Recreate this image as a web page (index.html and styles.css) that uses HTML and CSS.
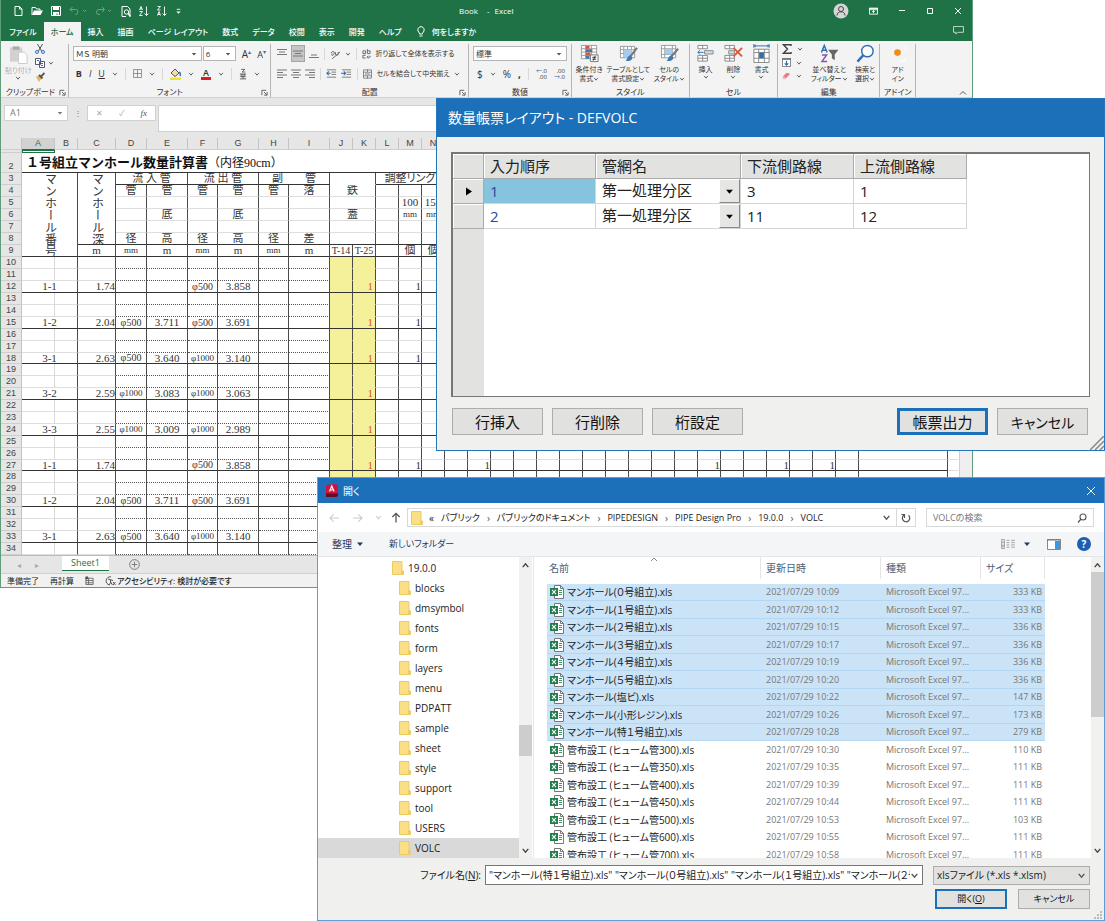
FILE: index.html
```html
<!DOCTYPE html>
<html lang="ja">
<head>
<meta charset="utf-8">
<title>Book - Excel</title>
<link rel="stylesheet" href="styles.css">
</head>
<body>
<svg class="defs" aria-hidden="true">
  <symbol id="chev" viewBox="0 0 8 8"><path d="M1.5 2.5 4 5.5 6.500 2.500" fill="none" stroke="currentColor" stroke-width="1.200"/></symbol>
  <symbol id="tri" viewBox="0 0 8 8"><path d="M1 2.500h6L4 6z" fill="currentColor"/></symbol>
  <symbol id="launch" viewBox="0 0 8 8"><path d="M1 7V1.500h5M3.500 3.500 6.500 6.500M7 3.500V7H3.500" fill="none" stroke="#555"/></symbol>
  <symbol id="folder" viewBox="0 0 12 14"><path d="M.5.500h9.500v9.500h1.500v3.500H.500z" fill="#fbdf86" stroke="#eccb63"/><path d="M10 9.500v3.500" stroke="#e3b94a"/></symbol>
  <symbol id="xls" viewBox="0 0 14 14"><path d="M4.500.500h6l3 3v10h-9z" fill="#fff" stroke="#777"/><path d="M10.500.500v3h3" fill="none" stroke="#777"/><path d="M9 5.500h3M9 7.500h3M9 9.500h3" stroke="#3c9a67"/><path d="M0 3h8v8H0z" fill="#1f7f4c"/><path d="M2 4.800l4 4.400M6 4.800 2 9.200" stroke="#fff" stroke-width="1.100"/></symbol>
  <symbol id="lines-l" viewBox="0 0 10 9"><path d="M0 1h10M0 3.500h6M0 6h10M0 8.500h6" stroke="#777"/></symbol>
  <symbol id="lines-c" viewBox="0 0 10 9"><path d="M0 1h10M2 3.500h6M0 6h10M2 8.500h6" stroke="#777"/></symbol>
  <symbol id="lines-r" viewBox="0 0 10 9"><path d="M0 1h10M4 3.500h6M0 6h10M4 8.500h6" stroke="#777"/></symbol>
  <symbol id="indent-l" viewBox="0 0 12 9"><path d="M1 .500h10M6 3h5M6 5.500h5M1 8.500h10" stroke="#777"/><path d="M5 4.300H1M3 2.300l-2 2 2 2" fill="none" stroke="#2c6fb5" stroke-width="1.200"/></symbol>
  <symbol id="indent-r" viewBox="0 0 12 9"><path d="M1 .500h10M6 3h5M6 5.500h5M1 8.500h10" stroke="#777"/><path d="M0 4.300h5M3 2.300l2 2-2 2" fill="none" stroke="#2c6fb5" stroke-width="1.200"/></symbol>
</svg>

<main class="desktop">
  <section class="excel" aria-label="Excel">
    <header class="xl-title">
      <div class="quick">
        <svg viewBox="0 0 10 10" width="10" height="10"><path d="M2 .500h4.500l2.500 2.500v6.500H2zM6.500.500v2.500H9" fill="none" stroke="#fff"/></svg>
        <svg viewBox="0 0 12 10" width="12" height="10"><path d="M1 9V1.500h3.500l1 1.500H9v1.500" fill="none" stroke="#fff"/><path d="M1 9l2-4.500h9L9.500 9z" fill="#fff"/></svg>
        <svg viewBox="0 0 10 10" width="10" height="10"><path d="M.5.500h9v9h-9z" fill="none" stroke="#fff"/><path d="M2 1h6v3H2zM2 6h6v4H6.500V7.500h-1V10H2z" fill="#fff"/></svg>
        <svg class="dim" viewBox="0 0 18 10" width="18" height="10"><path d="M3.500 1 1 3.500 3.500 6M1 3.500h5.500a2.500 2.500 0 0 1 0 5H6" fill="none" stroke="#fff"/><path d="m14 4 1.500 1.500L17 4" fill="none" stroke="#fff"/></svg>
        <svg class="dim" viewBox="0 0 18 10" width="18" height="10"><path d="M7 1l2.500 2.500L7 6M9.500 3.500H4a2.500 2.500 0 0 0 0 5h1" fill="none" stroke="#fff"/><path d="m13 4 1.500 1.500L16 4" fill="none" stroke="#fff"/></svg>
        <svg viewBox="0 0 10 11" width="10" height="11"><path d="M1 10.500V.500h5.500L9 3v7.500M1 10.500h4" fill="none" stroke="#fff"/><circle cx="5.500" cy="6" r="2.200" fill="none" stroke="#fff"/><path d="m7 7.500 2.500 3" stroke="#fff" stroke-width="1.400"/></svg>
        <svg viewBox="0 0 10 10" width="10" height="10"><path d="M.5 4 2 .500 3.500 4M1 3h2M.5 5.500h3L.500 9.500h3M7.500.500v9M5.500 7.500l2 2 2-2" fill="none" stroke="#fff" stroke-width=".9"/></svg>
        <svg viewBox="0 0 10 10" width="10" height="10"><path d="M.5.500h3L.500 4h3M.5 9.500 2 5.500l1.500 4M1 8.500h2M7.500.500v9M5.500 7.500l2 2 2-2" fill="none" stroke="#fff" stroke-width=".9"/></svg>
        <svg viewBox="0 0 8 8" width="7" height="7"><path d="M2 1.500h4" stroke="#fff"/><path d="M1.500 4h5L4 6.500z" fill="#fff"/></svg>
      </div>
      <h1 class="xl-name"><span>Book</span><span>-</span><span>Excel</span></h1>
      <div class="xl-controls">
        <svg viewBox="0 0 16 16" width="16" height="16"><circle cx="8" cy="8" r="7.500" fill="#d5d5d5"/><circle cx="8" cy="6" r="2.500" fill="none" stroke="#444"/><path d="M4 12.500c0-5 8-5 8 0" fill="none" stroke="#444"/></svg>
        <svg viewBox="0 0 10 8" width="9" height="8"><path d="M.5 1h9v6.500h-9z" fill="none" stroke="#fff"/><path d="M0 1h10v1.500H0zM5 3.500v3M3.500 5 5 3.500 6.500 5" stroke="#fff" fill="none"/></svg>
        <svg viewBox="0 0 8 8" width="8" height="8"><path d="M1 3.500h6" stroke="#fff"/></svg>
        <svg viewBox="0 0 8 8" width="8" height="8"><path d="M1.500 1.500h5v5h-5z" fill="none" stroke="#fff"/></svg>
        <svg viewBox="0 0 8 8" width="8" height="8"><path d="m1 1 6 6M7 1 1 7" stroke="#fff"/></svg>
      </div>
    </header>
    <nav class="tabs">
      <button>ファイル</button><button class="on">ホーム</button><button>挿入</button><button>描画</button><button>ページ レイアウト</button><button>数式</button><button>データ</button><button>校閲</button><button>表示</button><button>開発</button><button>ヘルプ</button>
      <button class="ask"><svg viewBox="0 0 8 11" width="8" height="11"><path d="M2.500 8V7C-.5 4.500 1 .700 4 .700S8.500 4.500 5.500 7v1zM2.500 10h3" fill="none" stroke="#fff"/></svg>何をしますか</button>
      <svg class="comment" viewBox="0 0 12 10" width="11" height="9"><path d="M.5.500h11v6.500H5L3 9V7H.500z" fill="none" stroke="#cfe3d7"/></svg>
    </nav>

    <div class="ribbon">
      <div class="group">
        <div class="body clip">
          <button class="big faded"><svg viewBox="0 0 20 20" width="19" height="19"><path d="M1 2.500h13v15H1z" fill="#d3d0d0"/><path d="M4 1.500h7V5H4z" fill="#aaa"/><path d="M10 7.500h6l3 3v9h-9z" fill="#fff" stroke="#c9c9c9"/></svg>貼り付け<svg class="cv"><use href="#chev"/></svg></button>
          <div class="stack">
            <svg viewBox="0 0 10 10" width="10" height="10"><path d="M2.500 0 6.500 7M7.500 0l-4 7" stroke="#555"/><circle cx="2" cy="8" r="1.500" fill="none" stroke="#2c6fb5"/><circle cx="8" cy="8" r="1.500" fill="none" stroke="#2c6fb5"/></svg>
            <svg viewBox="0 0 10 10" width="10" height="10"><path d="M.5.500h5v6h-5zM4.500 3.500h5v6h-5z" fill="#fff" stroke="#557"/><path d="M2 2.500h2M6 5.500h2M6 7.500h2" stroke="#2c6fb5"/></svg>
            <svg viewBox="0 0 10 10" width="10" height="10"><path d="m1 5 3-2 3 3-3 4z" fill="#eab45e"/><path d="m4 3 3.500 3.500M6 4.500 9.500 1" stroke="#555" stroke-width="1.800"/></svg>
          </div>
          <svg class="cv"><use href="#chev"/></svg>
        </div>
        <div class="cap">クリップボード<svg class="la"><use href="#launch"/></svg></div>
      </div>

      <div class="group">
        <div class="body rows">
          <div class="line">
            <div class="combo font"><input aria-label="フォント" value="ＭＳ 明朝"><svg class="cv"><use href="#tri"/></svg></div>
            <div class="combo size"><input aria-label="サイズ" value="6"><svg class="cv"><use href="#tri"/></svg></div>
            <b class="ltr la1">A<sup>▴</sup></b><b class="ltr la2">A<sup>▾</sup></b>
          </div>
          <div class="line biu">
            <b>B</b><i>I</i><u>U</u><svg class="cv"><use href="#chev"/></svg>
            <span class="bar"></span>
            <svg viewBox="0 0 10 10" width="9" height="9"><path d="M.5.500h9v9h-9zM5 .500v9M.5 5h9" fill="none" stroke="#888"/></svg><svg class="cv"><use href="#chev"/></svg>
            <span class="bar"></span>
            <svg viewBox="0 0 11 12" width="11" height="12"><path d="M1 5 5 1l4 4-4 3.500z" fill="#f6ddb0" stroke="#555"/><path d="M9 4c1.500 1 1.500 3 1 4" stroke="#2c6fb5" fill="none" stroke-width="1.500"/><path d="M0 9.500h11V12H0z" fill="#eee32f"/></svg><svg class="cv"><use href="#chev"/></svg>
            <span class="fcol">A</span><svg class="cv"><use href="#chev"/></svg>
            <span class="bar"></span>
            <svg viewBox="0 0 9 12" width="8" height="12"><path d="M2.500.800h4l-3 3h3.500M1 6h7M2.500 6v3M6.500 6v3M1.500 9h6M4.500 6v5.500M1 11.500h7" fill="none" stroke="#555"/></svg><svg class="cv"><use href="#chev"/></svg>
          </div>
        </div>
        <div class="cap">フォント<svg class="la"><use href="#launch"/></svg></div>
      </div>

      <div class="group">
        <div class="body rows">
          <div class="line al">
            <svg viewBox="0 0 10 9" width="10" height="9"><path d="M0 .500h10M2 3h6M0 5.500h10" stroke="#777"/></svg>
            <span class="pressed"><svg viewBox="0 0 10 9" width="10" height="9"><path d="M0 2h10M2 4.500h6M0 7h10" stroke="#777"/></svg></span>
            <svg viewBox="0 0 10 9" width="10" height="9"><path d="M2 6h6M0 8.500h10" stroke="#777"/></svg>
            <span class="bar"></span>
            <svg viewBox="0 0 11 10" width="11" height="10"><path d="M1 4c2-3 4-1 3 1S1 7 2 4.500M5 3l1 3c2 1 3-1 2-3M2 10l8-7" fill="none" stroke="#666"/></svg><svg class="cv"><use href="#chev"/></svg>
            <span class="bar"></span>
            <svg viewBox="0 0 10 11" width="9" height="10"><path d="M1 2h3v3H1zM6 0v5h3V2H6M4 7H1v3h3M9 7.500v1.500H6M7 7.500 5.500 9 7 10.500" fill="none" stroke="#567"/></svg><span>折り返して全体を表示する</span>
          </div>
          <div class="line al">
            <svg width="10" height="9"><use href="#lines-l"/></svg><svg width="10" height="9"><use href="#lines-c"/></svg><svg width="10" height="9"><use href="#lines-r"/></svg>
            <span class="bar"></span>
            <svg width="11" height="9"><use href="#indent-l"/></svg><svg width="11" height="9"><use href="#indent-r"/></svg>
            <span class="bar"></span>
            <svg viewBox="0 0 10 10" width="9" height="10"><path d="M.5.500h9v9h-9zM.5 3h9M.5 7h9M5 0v3M5 7v3" fill="#fff" stroke="#777"/><path d="M2 5h6" stroke="#2c6fb5"/></svg><span>セルを結合して中央揃え</span><svg class="cv"><use href="#chev"/></svg>
          </div>
        </div>
        <div class="cap">配置<svg class="la"><use href="#launch"/></svg></div>
      </div>

      <div class="group">
        <div class="body rows">
          <div class="line"><div class="combo num"><input aria-label="表示形式" value="標準"><svg class="cv"><use href="#tri"/></svg></div></div>
          <div class="line nums"><span>$</span><svg class="cv"><use href="#chev"/></svg><span>%</span><b>,</b><span class="bar"></span>
            <span class="dec"><span><em>←</em>.0</span><span>.00</span></span><span class="dec"><span>.00</span><span><em>→</em>.0</span></span></div>
        </div>
        <div class="cap">数値<svg class="la"><use href="#launch"/></svg></div>
      </div>

      <div class="group">
        <div class="body bigs">
          <button class="big"><svg viewBox="0 0 20 20" width="19" height="19"><path d="M1.500 1.500h16v14h-16zM1.500 5h16M1.500 8.500h16M1.500 12h16M6 1.500v14M12 1.500v14" fill="#fff" stroke="#999"/><path d="M6 2h4v3H6zM6 9h5v3H6z" fill="#d9573c"/><path d="M6 5.500h7v3H6zM6 12.500h4v3H6z" fill="#3d7ab8"/><path d="M11 11.500h8v7h-8z" fill="#fff" stroke="#777"/><path d="M13 14h4M13 16h4M16 12.500l-2 5" stroke="#333"/></svg>条件付き<span>書式<svg class="cv"><use href="#chev"/></svg></span></button>
          <button class="big"><svg viewBox="0 0 20 20" width="19" height="19"><path d="M1.500 2.500h15v12h-15zM1.500 6h15M1.500 10h15M5 2.500v12M9 2.500v12M13 2.500v12" fill="#fff" stroke="#999"/><path d="M5 6h9v8H5z" fill="#a9cbea"/><path d="m19 4-7 9" stroke="#777" stroke-width="2.200"/><path d="M12 12c-3 0-3 4-5 5.500 4 1 7 0 7-3.500z" fill="#3d7ab8"/></svg>テーブルとして<span>書式設定<svg class="cv"><use href="#chev"/></svg></span></button>
          <button class="big"><svg viewBox="0 0 20 20" width="19" height="19"><path d="M1.500 1.500h15v13h-15zM1.500 5h15M1.500 11h15M5 1.500v13M13 1.500v13" fill="#fff" stroke="#999"/><path d="M5 5h8v6H5z" fill="#a9cbea"/><path d="m19 5-7 8" stroke="#777" stroke-width="2.200"/><path d="M12 12c-3 0-3 4-5 5.500 4 1 7 0 7-3.500z" fill="#3d7ab8"/></svg>セルの<span>スタイル<svg class="cv"><use href="#chev"/></svg></span></button>
        </div>
        <div class="cap">スタイル</div>
      </div>

      <div class="group">
        <div class="body bigs">
          <button class="big"><svg viewBox="0 0 20 20" width="19" height="19"><path d="M2 1.500h10V5H2zM7 1.500V5M2 12h10v6H2zM2 15h10M7 12v6" fill="#fff" stroke="#888"/><path d="M9 7h9v3.500H9z" fill="#c9dff2" stroke="#888"/><path d="M8 8.800H2M4 6.500 2 8.800 4 11" fill="none" stroke="#2c6fb5"/></svg>挿入<svg class="cv"><use href="#chev"/></svg></button>
          <button class="big"><svg viewBox="0 0 20 20" width="19" height="19"><path d="M1 1.500h10V5H1zM6 1.500V5M1 12h10v6H1zM1 15h10M6 12v6" fill="#fff" stroke="#888"/><path d="M5 7h6v3.500H5z" fill="#c9dff2" stroke="#888"/><path d="m10 4 9 9M19 4l-9 9" stroke="#d9573c" stroke-width="2"/></svg>削除<svg class="cv"><use href="#chev"/></svg></button>
          <button class="big"><svg viewBox="0 0 20 20" width="19" height="19"><path d="M2 2h16M2 0v4M18 0v4M4 1 2.500 2 4 3M16 1l1.500 1L16 3" fill="none" stroke="#2c6fb5"/><path d="M2 5.500h16v14H2zM2 9h16M2 15h16M7 5.500v14M13 5.500v14" fill="#fff" stroke="#888"/><path d="M7.500 9h5v6h-5z" fill="#2c6fb5"/></svg>書式<svg class="cv"><use href="#chev"/></svg></button>
        </div>
        <div class="cap">セル</div>
      </div>

      <div class="group">
        <div class="body edit">
          <div class="stack">
            <span><svg viewBox="0 0 10 10" width="10" height="10"><path d="M9 2V.800H1.500L5.500 5l-4 4.200H9V8" fill="none" stroke="#444" stroke-width="1.400"/></svg><svg class="cv"><use href="#chev"/></svg></span>
            <span><svg viewBox="0 0 10 10" width="9" height="9"><path d="M.5 1h9v8.500h-9z" fill="#fff" stroke="#777"/><path d="M0 1h10" stroke="#777" stroke-width="2"/><path d="M5 3v5M3 6l2 2 2-2" fill="none" stroke="#2c6fb5" stroke-width="1.300"/></svg><svg class="cv"><use href="#chev"/></svg></span>
            <span><svg viewBox="0 0 10 10" width="9" height="9"><path d="m1 6 4-4 4 1-4.500 5z" fill="#e8798c"/><path d="m1 6 3.500 2-1 1.500-3-1z" fill="#f3b5be"/></svg><svg class="cv"><use href="#chev"/></svg></span>
          </div>
          <button class="big"><svg viewBox="0 0 20 20" width="19" height="19"><path d="M1.500 9 4.500 1.500 7.500 9M2.500 6.500h4" fill="none" stroke="#2c6fb5" stroke-width="1.500"/><path d="M2 11.500h5l-5 7h5.500" fill="none" stroke="#8a55a8" stroke-width="1.500"/><path d="M8.500 6h11l-4 5v6l-3-2v-4z" fill="#666"/></svg>並べ替えと<span>フィルター<svg class="cv"><use href="#chev"/></svg></span></button>
          <button class="big"><svg viewBox="0 0 20 20" width="19" height="19"><circle cx="12" cy="7.500" r="6" fill="#fff" stroke="#2c6fb5" stroke-width="1.500"/><path d="m7.500 12-6 6.500" stroke="#2c6fb5" stroke-width="2.500"/></svg>検索と<span>選択<svg class="cv"><use href="#chev"/></svg></span></button>
        </div>
        <div class="cap">編集</div>
      </div>

      <div class="group">
        <div class="body bigs"><button class="big"><svg viewBox="0 0 20 20" width="19" height="19"><circle cx="10" cy="9" r="3.500" fill="#f08c1a"/><path d="M18 2v4M13 18h5v-4" fill="none" stroke="#fff"/></svg>アド<span>イン</span></button></div>
        <div class="cap">アドイン</div>
      </div>
      <div class="group last"><svg viewBox="0 0 8 8" width="8" height="8"><path d="M1 5.500 4 2.500l3 3" fill="none" stroke="#555"/></svg></div>
    </div>

    <div class="formula">
      <div class="namebox"><input aria-label="名前ボックス" value="A1"><svg class="cv"><use href="#tri"/></svg></div>
      <span class="dots">⋮</span>
      <div class="fx"><span>✕</span><span>✓</span><i>fx</i></div>
      <input class="fbar" aria-label="数式バー">
    </div>

    <div class="sheetwrap">
      <table class="sheet">
        <colgroup id="cols"></colgroup>
        <thead><tr id="letters"></tr></thead>
        <tbody id="top">
          <tr class="r1"><th></th><td class="active"></td><td colspan="33"></td></tr>
          <tr class="r2"><th>2</th><td colspan="34" class="title"><b>１号組立マンホール数量計算書</b><span>（内径90cm）</span></td></tr>
          <tr><th>3</th><td colspan="2" rowspan="7" class="k b vert"><span>マンホール番号</span></td><td rowspan="6" class="k b vert"><span>マンホール深</span></td><td colspan="2" class="k b">流 入 管</td><td colspan="2" class="k b">流 出 管</td><td colspan="2" class="k b">副　　管</td><td colspan="2" class="k"></td><td colspan="3" class="k b">調整リング</td><td class="b" colspan="20"></td></tr>
          <tr><th>4</th><td class="k g">管</td><td class="k g">管</td><td class="k g">管</td><td class="k g">管</td><td class="k g">管</td><td class="k g">落</td><td colspan="2" class="k g">鉄</td><td class="k g"></td><td class="k g"></td><td class="k g"></td><td colspan="20" class="g"></td></tr>
          <tr><th>5</th><td class="k g"></td><td class="k g"></td><td class="k g"></td><td class="k g"></td><td class="k g"></td><td class="k g"></td><td colspan="2" class="k g"></td><td class="k g"></td><td class="k g">100</td><td class="k g">150</td><td colspan="20" class="g"></td></tr>
          <tr><th>6</th><td class="k g"></td><td class="k g">底</td><td class="k g"></td><td class="k g">底</td><td class="k g"></td><td class="k g"></td><td colspan="2" class="k g">蓋</td><td class="k g"></td><td class="k g xs">mm</td><td class="k g xs">mm</td><td colspan="20" class="g"></td></tr>
          <tr><th>7</th><td class="k g"></td><td class="k g"></td><td class="k g"></td><td class="k g"></td><td class="k g"></td><td class="k g"></td><td colspan="2" class="k g"></td><td class="k g"></td><td class="k g"></td><td class="k g"></td><td colspan="20" class="g"></td></tr>
          <tr><th>8</th><td class="k b">径</td><td class="k b">高</td><td class="k b">径</td><td class="k b">高</td><td class="k b">径</td><td class="k b">差</td><td colspan="2" class="k b"></td><td class="k b"></td><td class="k b"></td><td class="k b"></td><td colspan="20" class="b"></td></tr>
          <tr><th>9</th><td class="k b">m</td><td class="k b xs">mm</td><td class="k b">m</td><td class="k b xs">mm</td><td class="k b">m</td><td class="k b xs">mm</td><td class="k b">m</td><td class="k b s">T-14</td><td class="k b s">T-25</td><td class="k b"></td><td class="k b">個</td><td class="k b">個</td><td colspan="20" class="b"></td></tr>
        </tbody>
        <tbody id="data"></tbody>
      </table>
      <div class="vscroll"></div>
    </div>

    <div class="sheettabs"><span class="arr">◂</span><span class="arr">▸</span><button>Sheet1</button><svg viewBox="0 0 12 12" width="11" height="11"><circle cx="6" cy="6" r="5.300" fill="none" stroke="#777"/><path d="M6 3v6M3 6h6" stroke="#777"/></svg></div>
    <footer class="status"><span>準備完了</span><span>再計算</span><svg viewBox="0 0 10 10" width="9" height="9"><path d="M1 2.500h8v7H1zM1 5h8M1 7.500h8M4 2.500v7" fill="none" stroke="#666"/><circle cx="2" cy="2" r="1.800" fill="#555"/></svg><span class="acc"><svg viewBox="0 0 11 10" width="11" height="10"><path d="M6 .800A4 4 0 1 0 4.500 9M3 3l5 1.500M5.500 4v2l2 3M6 6 4 9M8 6l2.500 3M10.500 6 8 9" fill="none" stroke="#555"/></svg>アクセシビリティ: 検討が必要です</span></footer>
  </section>

  <section class="layout" aria-label="数量帳票レイアウト">
    <h2>数量帳票レイアウト - DEFVOLC</h2>
    <div class="lbody">
      <div class="gridbox">
        <table class="dgrid">
          <colgroup><col class="c0"><col class="c1"><col class="c2"><col class="c3"><col class="c3"></colgroup>
          <thead><tr><th></th><th>入力順序</th><th>管網名</th><th>下流側路線</th><th>上流側路線</th></tr></thead>
          <tbody>
            <tr><th><svg viewBox="0 0 6 8" width="6" height="9"><path d="M0 0v8l6-4z"/></svg></th><td class="num sel">1</td><td><div class="dd"><span>第一処理分区</span><button aria-label="管網名を選択"><svg class="cv"><use href="#tri"/></svg></button></div></td><td>3</td><td>1</td></tr>
            <tr><th></th><td class="num">2</td><td><div class="dd"><span>第一処理分区</span><button aria-label="管網名を選択"><svg class="cv"><use href="#tri"/></svg></button></div></td><td>11</td><td>12</td></tr>
          </tbody>
        </table>
        <div class="rail"></div>
      </div>
      <div class="lbtns"><button>行挿入</button><button>行削除</button><button>桁設定</button><button class="primary">帳票出力</button><button class="cancel">キャンセル</button></div>
    </div>
    <svg class="grip" viewBox="0 0 14 14" width="14" height="14"><path d="M0 14 14 0M5 14l9-9M10 14l4-4" stroke="#888" stroke-width="1.500"/></svg>
  </section>

  <section class="open" aria-label="開く">
    <header class="otitle"><svg viewBox="0 0 12 13" width="12" height="13"><path d="M0 1l9-1 3 1v11l-2 1H0z" fill="#d3123f"/><path d="M0 9.500h12V12l-2 1H0z" fill="#6d0a24"/><path d="M3.500 7.500 5.800 2l2.300 5.500M4.500 6h2.800" fill="none" stroke="#fff" stroke-width="1.200"/></svg><h2>開く</h2><svg class="x" viewBox="0 0 10 10" width="10" height="10"><path d="m1 1 8 8M9 1 1 9" stroke="#fff"/></svg></header>
    <div class="address">
      <svg viewBox="0 0 12 10" width="11" height="10"><path d="M11 5H1.500M5 1 1 5l4 4" fill="none" stroke="#ccc" stroke-width="1.200"/></svg>
      <svg viewBox="0 0 12 10" width="11" height="10"><path d="M1 5h9.500M7 1l4 4-4 4" fill="none" stroke="#ccc" stroke-width="1.200"/></svg>
      <svg class="cv pale"><use href="#chev"/></svg>
      <svg viewBox="0 0 10 12" width="10" height="11"><path d="M5 11.500V1.500M1 5.500l4-4 4 4" fill="none" stroke="#555" stroke-width="1.400"/></svg>
      <div class="path"><svg width="12" height="14"><use href="#folder"/></svg><span>«</span><span>パブリック</span><i>›</i><span>パブリックのドキュメント</span><i>›</i><span>PIPEDESIGN</span><i>›</i><span>PIPE Design Pro</span><i>›</i><span>19.0.0</span><i>›</i><span>VOLC</span><svg class="cv end"><use href="#chev"/></svg><span class="re"><svg viewBox="0 0 10 10" width="10" height="10"><path d="M3 2a3.700 3.700 0 1 0 4.500.300M3.500 5V1.500H.500" fill="none" stroke="#555" stroke-width="1.200"/></svg></span></div>
      <label class="search"><input type="text" placeholder="VOLCの検索" aria-label="VOLCの検索"><svg viewBox="0 0 10 10" width="10" height="10"><circle cx="6" cy="4" r="3" fill="none" stroke="#555" stroke-width="1.100"/><path d="M4 6 1 9.500" stroke="#555" stroke-width="1.200"/></svg></label>
    </div>
    <div class="tools"><button>整理<svg class="cv"><use href="#tri"/></svg></button><button class="newf">新しいフォルダー</button>
      <span class="tright"><svg viewBox="0 0 15 11" width="14" height="10"><path d="M.5.500h3v10h-3zM.5 3.500h3M.5 7h3" fill="none" stroke="#999"/><path d="M6 1.500h3M11 1.500h4M6 4h3M11 4h4M6 6.500h3M11 6.500h4M6 9h3M11 9h4" stroke="#999"/><path d="M1.500 8.500h1" stroke="#d33"/></svg><svg class="cv"><use href="#tri"/></svg><svg class="pane" viewBox="0 0 14 11" width="14" height="11"><path d="M.5.500h13v10H.500z" fill="#fff" stroke="#888"/><path d="M0 1h14" stroke="#777"/><path d="M8 2h5v8H8z" fill="#3e97dd"/></svg><span class="help">?</span></span></div>
    <div class="obody">
      <div class="treewrap"><ul class="tree" id="tree"></ul><div class="sb"><svg class="cv"><use href="#chev"/></svg><span class="thumb"></span><svg class="cv"><use href="#chev"/></svg></div></div>
      <div class="listwrap">
        <svg class="sort" viewBox="0 0 8 5" width="8" height="5"><path d="M1 4l3-3 3 3" fill="none" stroke="#888"/></svg>
        <table class="files">
          <colgroup><col><col class="cd"><col class="ct"><col class="cs"></colgroup>
          <thead><tr><th>名前</th><th>更新日時</th><th>種類</th><th>サイズ</th></tr></thead>
          <tbody id="files"></tbody>
        </table>
        <div class="sb"><svg class="cv"><use href="#chev"/></svg><span class="thumb"></span><svg class="cv"><use href="#chev"/></svg></div>
      </div>
    </div>
    <div class="ofoot">
      <div class="frow"><label for="fname">ファイル名(<u>N</u>):</label>
        <div class="fname"><input id="fname" value='"マンホール(特１号組立).xls" "マンホール(０号組立).xls" "マンホール(１号組立).xls" "マンホール(２号組立).xls"'><svg class="cv"><use href="#chev"/></svg></div>
        <div class="ftype"><select aria-label="ファイルの種類"><option>xlsファイル (*.xls *.xlsm)</option></select><svg class="cv"><use href="#chev"/></svg></div></div>
      <div class="brow"><button class="primary">開く(<u>O</u>)</button><button>キャンセル</button></div>
    </div>
    <svg class="ogrip" viewBox="0 0 8 8" width="8" height="8"><path d="M6 0h2v2H6zM6 3h2v2H6zM3 3h2v2H3zM6 6h2v2H6zM3 6h2v2H3zM0 6h2v2H0z" fill="#bbb"/></svg>
  </section>
</main>
<script src="app.js"></script>
</body>
</html>
```
FILE: styles.css
```css
* { box-sizing: border-box; }
body { margin: 0; background: #fff; color: #222; font-family: "Open Sans", "Noto Sans CJK JP", sans-serif; font-size: 10px; font-feature-settings: "palt"; }
button, input, select { font: inherit; color: inherit; font-feature-settings: inherit; margin: 0; padding: 0; border: 0; background: none; border-radius: 0; outline: 0; min-width: 0; }
button { white-space: nowrap; }
h1, h2, ul { margin: 0; padding: 0; font-weight: normal; list-style: none; }
svg { display: block; flex: none; }
.defs { position: absolute; width: 0; height: 0; }
.cv { width: 7px; height: 7px; }
.desktop { position: relative; min-height: 100vh; overflow: hidden; }

/* Excel window */
.excel { position: absolute; left: 0; top: 0; right: 132px; border: 1px solid #5f9d7c; border-top: 0; font-size: 8px; line-height: 10px; background: #e6e6e6; display: flex; flex-direction: column; }
.xl-title { display: flex; align-items: center; justify-content: space-between; height: 22px; background: #1f7246; color: #fff; padding: 0 10px 0 12px; }
.quick { display: flex; align-items: center; gap: 8px; width: 420px; }
.dim { opacity: .35; }
.xl-name { display: flex; gap: 9px; font-size: 8px; flex: 1; padding-left: 26px; }
.xl-name span:nth-child(2) { margin-right: -4px; }
.xl-controls { display: flex; align-items: center; gap: 20px; }
.tabs { display: flex; align-items: stretch; height: 19px; background: #1f7246; color: #fff; padding-left: 1px; }
.tabs button { padding: 0 7px; font-weight: 500; }
.tabs .on { background: #f3f3f3; color: #1f7246; }
.tabs .ask { display: flex; align-items: center; gap: 7px; padding-left: 8px; }
.comment { margin: 4px 8px 0 auto; }
.ribbon { display: grid; grid-template-columns: 68fr 203fr 198fr 103fr 118fr 89fr 102fr 36fr 56fr; height: 57px; background: #f3f3f3; border-bottom: 1px solid #d2d2d2; padding-top: 3px; color: #333; }
.ribbon .cv { width: 6px; height: 6px; color: #555; }
.group { display: flex; flex-direction: column; justify-content: space-between; border-right: 1px solid #b5b5b5; min-width: 0; white-space: nowrap; }
.group.last { border: 0; justify-content: flex-end; align-items: flex-end; padding: 0 5px 0 0; }
.cap { position: relative; text-align: center; height: 9px; line-height: 7px; }
.ribbon .group:first-child .cap { padding-right: 8px; }
.la { position: absolute; right: 2px; bottom: 1px; width: 7px; height: 7px; }
.body { display: flex; padding: 0 4px; }
.clip { align-items: center; gap: 3px; }
.big { display: flex; flex-direction: column; align-items: center; font-size: 7px; line-height: 9px; }
.big > svg:first-child { margin-bottom: 2px; }
.big > span { display: flex; align-items: center; }
.faded { color: #b0b0b0; }
.stack { display: flex; flex-direction: column; gap: 4px; }
.stack span { display: flex; align-items: center; gap: 5px; }
.rows { flex-direction: column; gap: 3px; padding-top: 1px; }
.line { display: flex; align-items: center; height: 17px; gap: 6px; }
.combo { display: flex; align-items: center; height: 15px; background: #fff; border: 1px solid #b5b5b5; padding: 0 4px 0 2px; }
.combo input { flex: 1; width: 20px; }
.combo.font { flex: 1; max-width: 129px; }
.combo.size { width: 33px; margin-left: -5px; }
.combo.num { flex: 1; }
.ltr { font-weight: 500; font-size: 10px; }
.la2 { font-size: 9px; }
.ltr sup { font-size: 6px; color: #2c6fb5; }
.bar { width: 1px; height: 12px; background: #d8d8d8; }
.biu { gap: 7px; padding-left: 3px; font-size: 9px; }
.fcol { border-bottom: 3px solid #e11b1b; padding: 0 2px; line-height: 9px; font-weight: 600; }
.al { gap: 4px; padding-left: 2px; }
.al > span { font-size: 7px; }
.al > .bar { margin: 0 1px; }
.pressed { background: #c6c6c6; border: 1px solid #a5a5a5; padding: 3px 1px; }
.nums { gap: 7px; padding-left: 4px; font-size: 10px; }
.dec { display: flex; flex-direction: column; font-size: 6px; line-height: 6px; align-items: flex-end; }
.dec em { font-style: normal; color: #2c6fb5; }
.bigs { justify-content: space-around; padding: 0 2px; }
.edit { justify-content: space-between; }
.formula { display: flex; align-items: flex-start; height: 40px; padding-top: 7px; color: #777; }
.namebox { display: flex; align-items: center; width: 64px; height: 16px; margin-left: 3px; background: #fff; border: 1px solid #d0d0d0; padding: 0 4px 0 5px; }
.namebox input { flex: 1; width: 20px; font-size: 9px; }
.namebox .cv { width: 6px; height: 6px; }
.dots { width: 19px; text-align: center; line-height: 16px; }
.fx { display: flex; align-items: center; justify-content: space-around; width: 69px; height: 16px; background: #fff; border: 1px solid #d0d0d0; color: #aaa; }
.fx i { color: #555; font-family: "Liberation Serif", serif; font-size: 9px; }
.fbar { flex: 1; height: 27px; margin-left: 2px; background: #fff; border: 1px solid #d0d0d0; }

/* Worksheet */
.sheetwrap { display: flex; height: 417px; overflow: hidden; background: #fff; }
.vscroll { width: 13px; flex: none; background: #efefef; border-left: 1px solid #d0d0d0; }
.sheet { flex: 1; width: 100%; table-layout: fixed; border-collapse: separate; border-spacing: 0; font-family: "Liberation Serif", "Noto Sans CJK JP", serif; font-size: 11px; line-height: 11px; height: 0; color: #333; }
.sheet col { width: 23px; }
.sheet col.w11 { width: 11px; }
.sheet col.w21 { width: 21px; }
.sheet col.w30 { width: 30px; }
.sheet col.w31 { width: 31px; }
.sheet col.w33 { width: 33px; }
.sheet col.w38 { width: 38px; }
.sheet col.w41 { width: 41px; }
.sheet col.auto { width: auto; }
.sheet tr { height: 12px; }
.sheet th, .sheet td { padding: 0; white-space: nowrap; overflow: hidden; text-align: center; vertical-align: bottom; border-right: 1px solid transparent; border-bottom: 1px solid transparent; }
.sheet th { background: #e6e6e6; font: 9px/11px "Liberation Sans", sans-serif; color: #444; border-right-color: #c4c4c4; border-bottom-color: #cecece; }
.sheet thead th.cur { background: #d2d2d2; color: #1f7246; border-bottom-color: #1f7246; }
.sheet .r1 { height: 3px; }
.sheet .r1 td, .sheet .r1 th { height: 3px; line-height: 0; }
.sheet .r1 .active { border: 1px solid #1f7246; }
.sheet .r2 { height: 20px; }
.sheet .r2 th { vertical-align: bottom; }
.sheet .title { text-align: left; padding-left: 4px; font-size: 13px; line-height: 18px; border-bottom-color: #333; font-feature-settings: normal; vertical-align: middle; color: #111; }
.sheet .title b { font-weight: 700; }
.sheet .title span { font-size: 12px; }
.sheet .l { border-right-color: #d9d9d9; }
.sheet .g { border-bottom-color: #dedede; }
.sheet .k { border-right-color: #4a4a4a; }
.sheet .b { border-bottom-color: #333; }
.sheet .d { border-bottom: 1px dotted #555; }
.sheet .s { font-size: 10px; }
.sheet .xs { font-size: 9px; }
.sheet .r { text-align: right; }
.sheet .y { background: #f4f19a; color: #e2502e; text-align: right; padding-right: 2px; }
.sheet .vert { vertical-align: middle; font-size: 12px; line-height: 12px; font-feature-settings: normal; }
.vert span { display: inline-block; vertical-align: top; writing-mode: vertical-rl; line-height: 14px; margin: -1px 0; }
#data tr:nth-child(9n) { height: 11px; }
#data tr:nth-child(9n) td, #data tr:nth-child(9n) th { line-height: 10px; }
.sheettabs { display: flex; align-items: center; height: 18px; gap: 14px; padding-left: 16px; border-top: 1px solid #bbb; color: #aaa; }
.arr { width: 4px; }
.sheettabs button { align-self: stretch; background: #fff; color: #1f7246; border-bottom: 1px solid #1f7246; padding: 0 9px; font-size: 9px; margin-left: 9px; margin-bottom: 2px; }
.sheettabs svg { margin-left: 6px; }
.status { display: flex; align-items: center; height: 14px; gap: 11px; padding-left: 6px; background: #f1f1f1; border-top: 1px solid #d0d0d0; }
.acc { display: flex; gap: 1px; font-weight: 500; }

/* Layout dialog */
.layout { position: absolute; left: 436px; right: 0; top: 98px; border: 1px solid #2576b9; background: #f0f0ef; font-size: 15px; }
.layout h2 { height: 38px; padding-left: 11px; line-height: 38px; font-size: 14px; color: #fff; background: #1b70b9; }
.lbody { padding: 15px 14px; }
.gridbox { display: flex; flex-direction: column; height: 245px; background: #fff; border: 1px solid #777; border-left-width: 2px; border-top-width: 2px; }
.dgrid { width: 514px; table-layout: fixed; border-collapse: separate; border-spacing: 0; line-height: 22px; }
.c0 { width: 31px; } .c1 { width: 112px; } .c2 { width: 145px; } .c3 { width: 113px; }
.dgrid th, .dgrid td { height: 25px; padding: 0 0 0 6px; text-align: left; font-weight: normal; border-right: 1px solid #d5d5d5; border-bottom: 1px solid #d5d5d5; white-space: nowrap; }
.dgrid th { background: #e2e2e1; border-color: #aaa; box-shadow: inset 1px 1px #fff; }
.dgrid tbody th { padding-left: 13px; }
.dgrid .num { color: #2c4a9d; }
.dgrid .sel { background: #86c3de; }
.dd { display: flex; justify-content: space-between; height: 24px; }
.dd button { width: 21px; background: #e6e6e5; border: 1px solid #fff; border-right-color: #888; border-bottom-color: #888; display: flex; align-items: center; justify-content: center; color: #000; }
.dd .cv { width: 9px; height: 9px; }
.rail { width: 31px; flex: 1; background: #e2e2e1; }
.lbtns { display: flex; gap: 9px; margin-top: 11px; padding: 0 2px 0 1px; }
.lbtns button, .brow button { background: #e1e1e0; border: 1px solid #adadad; color: #111; }
.lbtns button { width: 91px; height: 27px; }
.lbtns .primary { margin-left: auto; border: 3px solid #1b70b9; }
.lbtns .cancel { font-size: 14px; }
.grip { position: absolute; right: 0; bottom: 0; }

/* Open dialog */
.open { position: absolute; left: 317px; right: 0; top: 477px; border: 1px solid #5a9fd6; background: #fff; display: flex; flex-direction: column; line-height: 14px; }
.otitle { display: flex; align-items: center; gap: 5px; height: 25px; background: #1b70b9; color: #fff; padding: 0 8px; }
.otitle h2 { font-size: 10px; }
.otitle .x { margin-left: auto; }
.address { display: flex; align-items: center; gap: 12px; height: 29px; padding: 0 10px 0 11px; color: #222; }
.pale { color: #ccc; }
.address > .cv { margin-right: -3px; }
.path { display: flex; align-items: center; flex: 1; height: 19px; gap: 7px; border: 1px solid #d9d9d9; padding-left: 3px; margin-left: -6px; white-space: nowrap; font-size: 9px; }
.path > span:nth-of-type(1) { margin: 0 0 0 -1px; font-size: 10px; }
.path i { font-style: normal; color: #555; font-size: 10px; }
.path .end { margin-left: auto; width: 9px; height: 9px; color: #555; }
.re { display: flex; align-items: center; align-self: stretch; padding: 0 4px; border-left: 1px solid #d9d9d9; margin-left: -2px; }
.search { display: flex; align-items: center; width: 168px; height: 19px; border: 1px solid #d9d9d9; padding: 0 6px; margin-left: -2px; font-size: 9px; }
.search input { flex: 1; }
.search input::placeholder { color: #777; opacity: 1; }
.tools { display: flex; align-items: center; gap: 25px; height: 25px; background: #f4f5f7; border-bottom: 1px solid #e4e6e9; padding: 0 13px 0 14px; color: #1e3a63; }
.tools button { display: flex; align-items: center; gap: 4px; }
.tools .newf { font-size: 9px; }
.tright { display: flex; align-items: center; gap: 8px; margin-left: auto; }
.tools .cv { width: 8px; height: 8px; }
.pane { margin: 0 8px; }
.help { width: 14px; height: 14px; border-radius: 50%; background: #1b5fae; color: #fff; font-weight: 700; text-align: center; line-height: 14px; }
.obody { display: flex; height: 301px; overflow: hidden; }
.treewrap { display: flex; width: 214px; flex: none; }
.tree { flex: 1; padding-top: 1px; }
.tree li { display: flex; align-items: center; gap: 4px; height: 20px; padding-left: 81px; }
.tree li:first-child { padding-left: 74px; }
.tree .cur { background: #d9d9d9; }
.sb { display: flex; flex-direction: column; align-items: center; justify-content: space-between; width: 13px; padding: 4px 0 3px; background: #f1f1f0; color: #444; }
.sb .cv { width: 9px; height: 9px; }
.sb .cv:first-child { transform: rotate(180deg); }
.sb .thumb { width: 13px; height: 31px; background: #cdcdcd; }
.listwrap { position: relative; display: flex; justify-content: space-between; flex: 1; border-left: 1px solid #e8e8e8; margin-left: 1px; min-width: 0; }
.treewrap .sb .thumb { margin: 64px 0 0; }
.listwrap .sb { justify-content: flex-start; gap: 2px; }
.listwrap .sb .thumb { height: 145px; margin: 0 0 auto; }
.sort { position: absolute; left: 116px; top: 0; }
.files { flex: 1; margin: 0 46px 0 13px; height: 0; table-layout: fixed; border-collapse: separate; border-spacing: 0; }
.cd { width: 120px; } .ct { width: 100px; } .cs { width: 64px; }
.files th { height: 22px; padding: 0 0 0 5px; text-align: left; font-weight: normal; color: #4c607a; border-right: 1px solid #e5e5e5; }
.files th:first-child { padding-left: 2px; }
.files tbody::before { content: ""; display: block; height: 5px; }
.files td { height: 17px; padding: 0 0 0 5px; line-height: 16px; white-space: nowrap; font-size: 9px; color: #777; border-bottom: 1px solid transparent; }
.files tr:nth-child(even) td { height: 18px; }
.files td:first-child { font-size: 10px; color: #222; padding-left: 3px; }
.files td:last-child { text-align: right; padding-right: 3px; }
.files .hit td { background: #cbe3f6; border-bottom-color: #b3d6f2; }
.fn { display: flex; align-items: center; gap: 3px; }
.ofoot { background: #f0f0ef; padding: 7px 14px 11px; display: flex; flex-direction: column; gap: 4px; }
.frow { display: flex; align-items: center; }
.frow label { flex: none; width: 153px; text-align: right; padding-right: 4px; }
.fname { display: flex; align-items: center; flex: 1; height: 20px; min-width: 0; background: #fff; border: 1px solid #777; padding: 0 3px; }
.fname input { flex: 1; }
.fname .cv, .ftype .cv { width: 9px; height: 9px; color: #555; }
.ftype { display: flex; align-items: center; width: 157px; height: 19px; margin-left: 10px; background: #e1e1e0; border: 1px solid #adadad; padding: 0 3px; }
.ftype select { flex: 1; appearance: none; }
.brow { display: flex; justify-content: flex-end; gap: 11px; }
.brow button { width: 72px; height: 20px; font-size: 9px; }
.brow .primary { border: 2px solid #1b70b9; }
.ogrip { position: absolute; right: 2px; bottom: 1px; }
```
FILE: app.js
```js
// Worksheet columns: row header, A-K in their own widths, narrow L-AF, stretchy AG, AH
const widths = ["w21", "w33", "", "w38", "w31", "w41", "w30", "w41", "w30", "w41"];
while (widths.length < 33) widths.push("");
widths.push("auto", "w11");
document.getElementById("cols").innerHTML = widths.map(w => `<col class="${w}">`).join("");

const letter = i => (i < 26 ? "" : "A") + String.fromCharCode(65 + i % 26);
document.getElementById("letters").innerHTML = "<th></th>" +
  Array.from({ length: 34 }, (_, i) => `<th${i ? "" : ' class="cur"'}>${i < 33 ? letter(i) : ""}</th>`).join("");

// Row number -> manhole, depth, inflow pipe, inflow level, outflow pipe, outflow level, ring counts
const rows = {
  12: ["1-1", "1.74", "", "", "φ500", "3.858", [12]],
  15: ["1-2", "2.04", "φ500", "3.711", "φ500", "3.691", [12]],
  18: ["3-1", "2.63", "φ500", "3.640", "φ1000", "3.140", [12]],
  21: ["3-2", "2.59", "φ1000", "3.083", "φ1000", "3.063", []],
  24: ["3-3", "2.55", "φ1000", "3.009", "φ1000", "2.989", []],
  27: ["1-1", "1.74", "", "", "φ500", "3.858", [12, 15, 25, 28, 30]],
  30: ["1-2", "2.04", "φ500", "3.711", "φ500", "3.691", []],
  33: ["3-1", "2.63", "φ500", "3.640", "φ1000", "3.140", []]
};
let html = "";
for (let n = 10; n <= 34; n++) {
  const r = rows[n];
  const line = r ? "b" : "g";
  const dash = r ? "b" : "d";
  html += `<tr><th>${n}</th>`;
  html += r ? `<td colspan="2" class="k b">${r[0]}</td>` : '<td class="l g"></td><td class="k g"></td>';
  html += `<td class="k r ${line}">${r ? r[1] : ""}</td>`;
  for (let c = 2; c < 8; c++) {
    const t = r && c < 6 ? r[c] : "";
    html += `<td class="k ${dash}${t === "φ1000" ? " xs" : t === "φ500" ? " s" : ""}">${t}</td>`;
  }
  html += `<td class="k y ${r ? "b" : ""}"></td><td class="k y ${r ? "b" : ""}">${r ? 1 : ""}</td>`;
  for (let c = 11; c < 33; c++) {
    html += `<td class="k r ${line}">${r && r[6].includes(c) ? 1 : ""}</td>`;
  }
  html += `<td class="g"></td></tr>`;
}
document.getElementById("data").innerHTML = html;

const folders = ["19.0.0", "blocks", "dmsymbol", "fonts", "form", "layers", "menu", "PDPATT", "sample", "sheet", "style", "support", "tool", "USERS", "VOLC"];
document.getElementById("tree").innerHTML = folders.map(f =>
  `<li${f === "VOLC" ? ' class="cur"' : ""}><svg width="12" height="14"><use href="#folder"/></svg>${f}</li>`).join("");

const files = [
  ["マンホール(０号組立).xls", "10:09", 333], ["マンホール(１号組立).xls", "10:12", 333],
  ["マンホール(２号組立).xls", "10:15", 336], ["マンホール(３号組立).xls", "10:17", 336],
  ["マンホール(４号組立).xls", "10:19", 336], ["マンホール(５号組立).xls", "10:20", 336],
  ["マンホール(塩ビ).xls", "10:22", 147], ["マンホール(小形レジン).xls", "10:26", 173],
  ["マンホール(特１号組立).xls", "10:28", 279], ["管布設工 (ヒューム管300).xls", "10:30", 110],
  ["管布設工 (ヒューム管350).xls", "10:35", 111], ["管布設工 (ヒューム管400).xls", "10:39", 111],
  ["管布設工 (ヒューム管450).xls", "10:44", 111], ["管布設工 (ヒューム管500).xls", "10:53", 103],
  ["管布設工 (ヒューム管600).xls", "10:55", 111], ["管布設工 (ヒューム管700).xls", "10:58", 111]
];
document.getElementById("files").innerHTML = files.map(([name, time, kb], i) =>
  `<tr${i < 9 ? ' class="hit"' : ""}><td><div class="fn"><svg width="14" height="14"><use href="#xls"/></svg>${name}</div></td><td>2021/07/29 ${time}</td><td>Microsoft Excel 97...</td><td>${kb} KB</td></tr>`).join("");
```
